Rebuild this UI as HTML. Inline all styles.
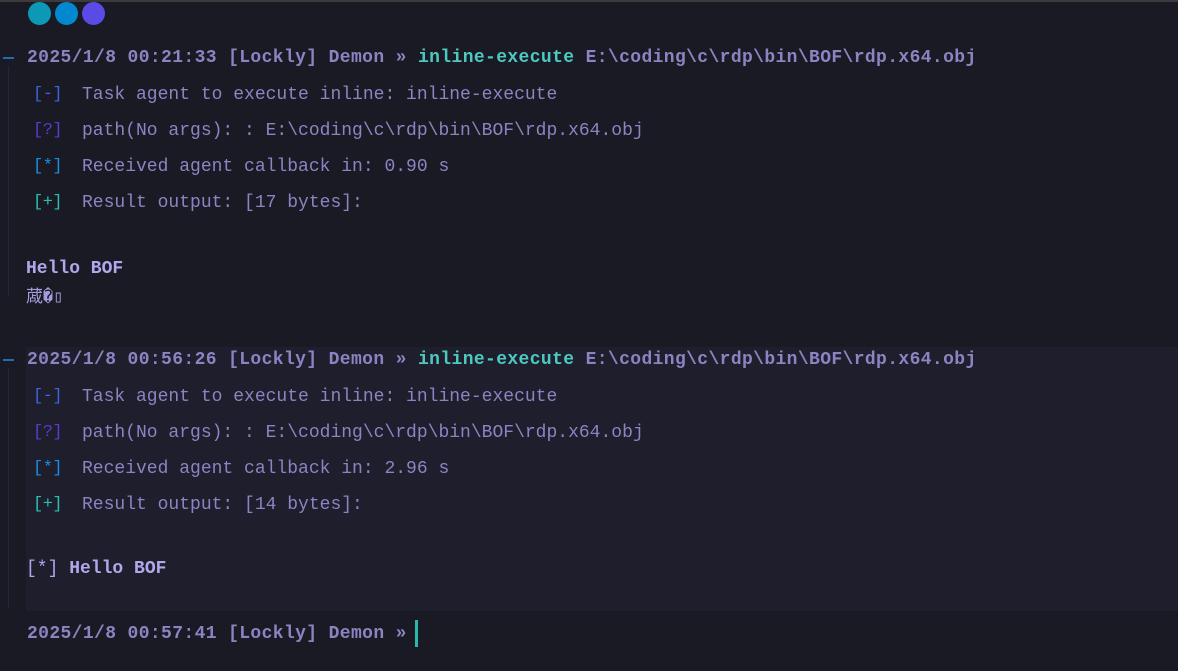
<!DOCTYPE html>
<html><head><meta charset="utf-8"><style>
html,body{margin:0;padding:0;}
body{width:1178px;height:671px;background:#1a1a25;position:relative;overflow:hidden;font-family:"Liberation Mono","DejaVu Sans Mono",monospace;color:#8a84c2;}
.top{position:absolute;left:0;top:0;width:1178px;height:2px;background:#3b3b3d;}
.c{position:absolute;top:2px;width:23px;height:23px;border-radius:50%;}
.l{position:absolute;left:0;height:30px;line-height:30px;font-size:18px;white-space:pre;}
.h{font-weight:bold;letter-spacing:0.37px;color:#8a84c2;left:27px;}
.t{left:82px;}
.k{position:absolute;left:33px;height:30px;line-height:30px;font-size:17px;white-space:pre;letter-spacing:-0.5px;}
.ie{color:#4ec9c0;}
.b1{color:#3b64e0}.b2{color:#5a3ad0}.b3{color:#1a8ee0}.b4{color:#2ac0b0}
.blk{position:absolute;left:26px;top:347px;width:1152px;height:264px;background:#1e1e2c;}
.g{position:absolute;left:8px;width:1px;background:#26263a;}
.m{position:absolute;left:3px;width:11px;height:2px;background:#1f6fb0;}
.w{color:#b0a8ec;font-weight:bold;}
.cur{position:absolute;left:415px;top:620px;width:3px;height:27px;background:#2ab8ac;}
</style></head><body>
<div class="top"></div>
<div class="c" style="left:28px;background:#0e98b8"></div>
<div class="c" style="left:55px;background:#0288cf"></div>
<div class="c" style="left:82px;background:#5a4ae6"></div>
<div class="g" style="top:66px;height:230px"></div>
<div class="g" style="top:368px;height:240px"></div>
<div class="blk"></div>
<div class="m" style="top:57px"></div>
<div class="m" style="top:359px"></div>

<div class="l h" style="top:43px">2025/1/8 00:21:33 [Lockly] Demon » <span class="ie">inline-execute</span> E:\coding\c\rdp\bin\BOF\rdp.x64.obj</div>
<div class="k b1" style="top:80px">[-]</div><div class="l t" style="top:80px">Task agent to execute inline: inline-execute</div>
<div class="k b2" style="top:116px">[?]</div><div class="l t" style="top:116px">path(No args): : E:\coding\c\rdp\bin\BOF\rdp.x64.obj</div>
<div class="k b3" style="top:152px">[*]</div><div class="l t" style="top:152px">Received agent callback in: 0.90 s</div>
<div class="k b4" style="top:188px">[+]</div><div class="l t" style="top:188px">Result output: [17 bytes]:</div>
<div class="l w" style="left:26px;top:254px">Hello BOF</div>
<div class="l" style="left:26px;top:284px;font-size:17px;color:#a39cdc;font-family:'Liberation Mono','Noto Sans CJK SC',monospace">蒧�▯</div>

<div class="l h" style="top:345px">2025/1/8 00:56:26 [Lockly] Demon » <span class="ie">inline-execute</span> E:\coding\c\rdp\bin\BOF\rdp.x64.obj</div>
<div class="k b1" style="top:382px">[-]</div><div class="l t" style="top:382px">Task agent to execute inline: inline-execute</div>
<div class="k b2" style="top:418px">[?]</div><div class="l t" style="top:418px">path(No args): : E:\coding\c\rdp\bin\BOF\rdp.x64.obj</div>
<div class="k b3" style="top:454px">[*]</div><div class="l t" style="top:454px">Received agent callback in: 2.96 s</div>
<div class="k b4" style="top:490px">[+]</div><div class="l t" style="top:490px">Result output: [14 bytes]:</div>
<div class="l w" style="left:26px;top:554px"><span style="font-weight:normal">[*]</span> Hello BOF</div>

<div class="l h" style="top:619px">2025/1/8 00:57:41 [Lockly] Demon »</div>
<div class="cur"></div>
</body></html>
